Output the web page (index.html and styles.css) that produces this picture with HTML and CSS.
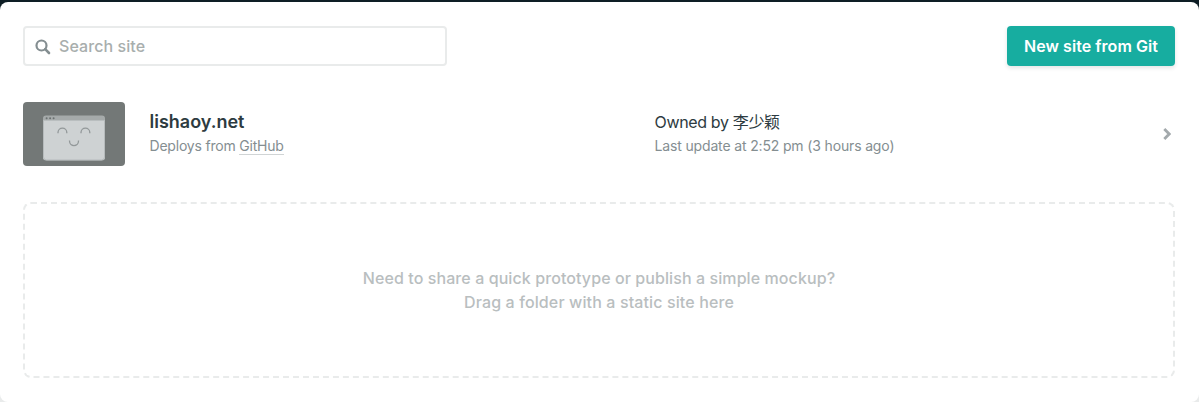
FILE: index.html
```html
<!DOCTYPE html>
<html lang="en">
<head>
<meta charset="utf-8">
<title>Sites</title>
<link rel="stylesheet" href="styles.css">
</head>
<body>
<main class="card">
  <header class="toolbar">
    <label class="search">
      <svg class="search-icon" width="16" height="16" viewBox="0 0 16 16"><circle cx="6.5" cy="6.5" r="5" fill="none" stroke="currentColor" stroke-width="2.2"/><path d="M10.2 10.2 14 14" stroke="currentColor" stroke-width="2.6" stroke-linecap="round"/></svg>
      <input class="search-input" type="text" placeholder="Search site">
    </label>
    <button class="new-site">New site from Git</button>
  </header>
  <section class="site">
    <svg class="thumb" width="102" height="64" viewBox="0 0 102 64">
      <rect width="102" height="64" rx="4" fill="#737877"/>
      <rect x="20" y="13.5" width="62" height="45" rx="3" fill="#a5aaaa"/>
      <path d="M20 18.5h62V55a3 3 0 0 1-3 3H23a3 3 0 0 1-3-3z" fill="#ced2d3"/>
      <path d="M20.5 18V55a3 3 0 0 0 3 3h55a3 3 0 0 0 3-3V18" fill="none" stroke="#b6bbbc"/>
      <g fill="#6b7171"><circle cx="23.6" cy="16.3" r="1"/><circle cx="27.1" cy="16.3" r="1"/><circle cx="30.6" cy="16.3" r="1"/></g>
      <g fill="none" stroke="#929899" stroke-width="1.3"><path d="M35 31.2v-.6a4.4 4.4 0 0 1 8.8 0v.6"/><path d="M58 31.2v-.6a4.4 4.4 0 0 1 8.8 0v.6"/><path d="M46.5 38.6v.5a4.5 4.5 0 0 0 9 0v-.5"/></g>
    </svg>
    <div class="info">
      <h2 class="site-name">lishaoy.net</h2>
      <p class="meta source">Deploys from <a class="provider">GitHub</a></p>
    </div>
    <div class="info">
      <p class="owner">Owned by 李少颖</p>
      <p class="meta">Last update at 2:52 pm (3 hours ago)</p>
    </div>
    <svg class="chevron" width="8" height="12" viewBox="0 0 8 12"><path d="M1.3 1 6.2 6 1.3 11" fill="none" stroke="#a3a9ac" stroke-width="2.8"/></svg>
  </section>
  <section class="dropzone">
    <p class="drop-line prompt">Need to share a quick prototype or publish a simple mockup?</p>
    <p class="drop-line">Drag a folder with a static site here</p>
  </section>
</main>
</body>
</html>
```
FILE: styles.css
```css
* { box-sizing: border-box; }
body {
  margin: 0;
  height: 402px;
  padding-top: 2px;
  overflow: hidden;
  background: linear-gradient(#0e1e25 0 50%, #e9ebeb 50%);
  font-family: Inter, "Noto Sans CJK SC", sans-serif;
  color: #2d3b41;
}
h2, p { margin: 0; white-space: nowrap; }
.card {
  height: 400px;
  padding: 24px 24px 24px 23px;
  background: #fff;
  border-radius: 8px;
  display: flex;
  flex-direction: column;
}
.toolbar { display: flex; justify-content: space-between; height: 40px; }
.search {
  width: 424px;
  display: flex;
  align-items: center;
  border: 2px solid #e9ebeb;
  border-radius: 4px;
  padding: 0 10px;
  color: #848e91;
}
.search-icon { margin-top: 1px; flex: none; }
.search-input {
  flex: 1;
  border: 0;
  outline: 0;
  padding: 0;
  margin-left: 8px;
  background: transparent;
  font: 500 16px/24px Inter, sans-serif;
  letter-spacing: .08px;
}
.search-input::placeholder { color: #a8aead; }
.new-site {
  width: 168px;
  padding: 0;
  border: 0;
  border-radius: 4px;
  background: #17ada0;
  color: #fff;
  font: 600 16px/24px Inter, sans-serif;
  letter-spacing: .05px;
  box-shadow: 0 2px 4px rgba(14, 30, 37, .12);
  white-space: nowrap;
}
.site {
  display: grid;
  grid-template-columns: 102px 481px 1fr 8px;
  column-gap: 24px;
  align-items: center;
  height: 64px;
  margin-top: 36px;
  padding-right: 4px;
}
.info { padding-left: .5px; }
.site-name { font-size: 18px; line-height: 24px; font-weight: 600; }
.owner { font-size: 16px; line-height: 24px; letter-spacing: -.35px; }
.meta { font-size: 14px; line-height: 24px; color: #848e91; letter-spacing: -.15px; }
.source { letter-spacing: -.2px; }
.provider { border-bottom: 1px solid #d0d4d5; }
.dropzone {
  height: 176px;
  margin-top: 36px;
  border: 2px dashed #e9ebeb;
  border-radius: 8px;
  display: flex;
  flex-direction: column;
  align-items: center;
  justify-content: center;
}
.drop-line { font-size: 16px; line-height: 24px; color: #b9bebf; font-weight: 500; letter-spacing: .12px; }
.prompt { letter-spacing: .085px; }
```
